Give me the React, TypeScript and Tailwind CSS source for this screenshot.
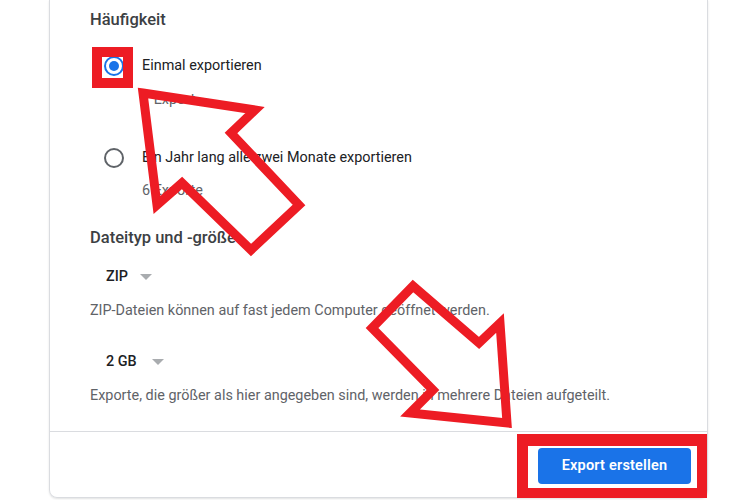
import React from "react";

function Radio({ checked }: { checked: boolean }) {
  return (
    <svg width="20" height="20" viewBox="0 0 20 20" className="shrink-0">
      <circle cx="10" cy="10" r="9" fill="white" stroke={checked ? "#1a73e8" : "#5f6368"} strokeWidth="2" />
      {checked && <circle cx="10" cy="10" r="5" fill="#1a73e8" />}
    </svg>
  );
}

function Caret() {
  return (
    <svg width="12" height="6" viewBox="0 0 12 6" className="shrink-0">
      <path d="M0 0 L12 0 L6 6 Z" fill="#a9acaf" />
    </svg>
  );
}

export default function App() {
  return (
    <div className="relative w-[750px] h-[500px] bg-white overflow-hidden" style={{ fontFamily: "Roboto, 'Liberation Sans', sans-serif" }}>
      <div className="ml-[49px] w-[659px] h-[498px] border-x border-b border-[#dadce0] rounded-b-[8px] flex flex-col shadow-[0_1px_2px_rgba(60,64,67,0.15)]">
        <div className="pl-[40px] pr-6 flex flex-col">
          <div className="mt-[10px] h-[20px] leading-[20px] text-[16.5px] font-medium text-[#3c4043]">Häufigkeit</div>

          <div className="mt-[24px] h-[24px] flex items-center">
            <div className="ml-[14px] w-[20px]"><Radio checked /></div>
            <span className="ml-[18px] text-[14.4px] text-[#202124]">Einmal exportieren</span>
          </div>
          <div className="mt-[12px] h-[20px] leading-[20px] pl-[52px] text-[14.4px] text-[#5f6368]">1 Export</div>

          <div className="mt-[36px] h-[24px] flex items-center">
            <div className="ml-[14px] w-[20px]"><Radio checked={false} /></div>
            <span className="ml-[18px] text-[14.4px] text-[#202124]">Ein Jahr lang alle zwei Monate exportieren</span>
          </div>
          <div className="mt-[11px] h-[20px] leading-[20px] pl-[52px] text-[14.4px] text-[#5f6368]">6 Exporte</div>

          <div className="mt-[27px] h-[20px] leading-[20px] text-[16.5px] font-medium text-[#3c4043]">Dateityp und -größe</div>

          <div className="mt-[19px] h-[20px] flex items-center pl-[16px]">
            <span className="text-[14.4px] font-medium text-[#202124] w-[34px]">ZIP</span>
            <Caret />
          </div>
          <div className="mt-[14px] h-[20px] leading-[20px] text-[14.4px] text-[#5f6368]">ZIP-Dateien können auf fast jedem Computer geöffnet werden.</div>

          <div className="mt-[31px] h-[20px] flex items-center pl-[16px]">
            <span className="text-[14.4px] font-medium text-[#202124] w-[46px]">2 GB</span>
            <Caret />
          </div>
          <div className="mt-[14px] h-[20px] leading-[20px] text-[14.4px] text-[#5f6368]">Exporte, die größer als hier angegeben sind, werden in mehrere Dateien aufgeteilt.</div>
        </div>

        <div className="mt-[25px] border-b border-[#dadce0]" />

        <div className="flex justify-end pt-[16px] pr-[16px]">
          <button className="w-[153px] h-[36px] rounded-[4px] bg-[#1a73e8] text-white text-[14.5px] font-semibold tracking-[0.2px]">
            Export erstellen
          </button>
        </div>
      </div>

      {/* Annotation boxes */}
      <div className="absolute left-[92px] top-[47px] w-[41px] h-[41px] border-[10px] border-[#ed1c24]" />
      <div className="absolute left-[517px] top-[434px] w-[190px] h-[64px] border-[#ed1c24] border-l-[11px] border-t-[12px] border-r-[10px] border-b-[10px]" />

      {/* Arrows */}
      <svg className="absolute left-0 top-0" width="750" height="500" viewBox="0 0 750 500">
        <polygon
          points="143,93 255,110 231,133 299,205 251,250 182,183 157,205"
          fill="none"
          stroke="#ed1c24"
          strokeWidth="9"
          strokeLinejoin="miter"
          strokeMiterlimit="10"
        />
        <polygon
          points="413,286 479,343 500,323 507,423 410,413 433,390 372,328"
          fill="none"
          stroke="#ed1c24"
          strokeWidth="9"
          strokeLinejoin="miter"
          strokeMiterlimit="10"
        />
      </svg>
    </div>
  );
}
